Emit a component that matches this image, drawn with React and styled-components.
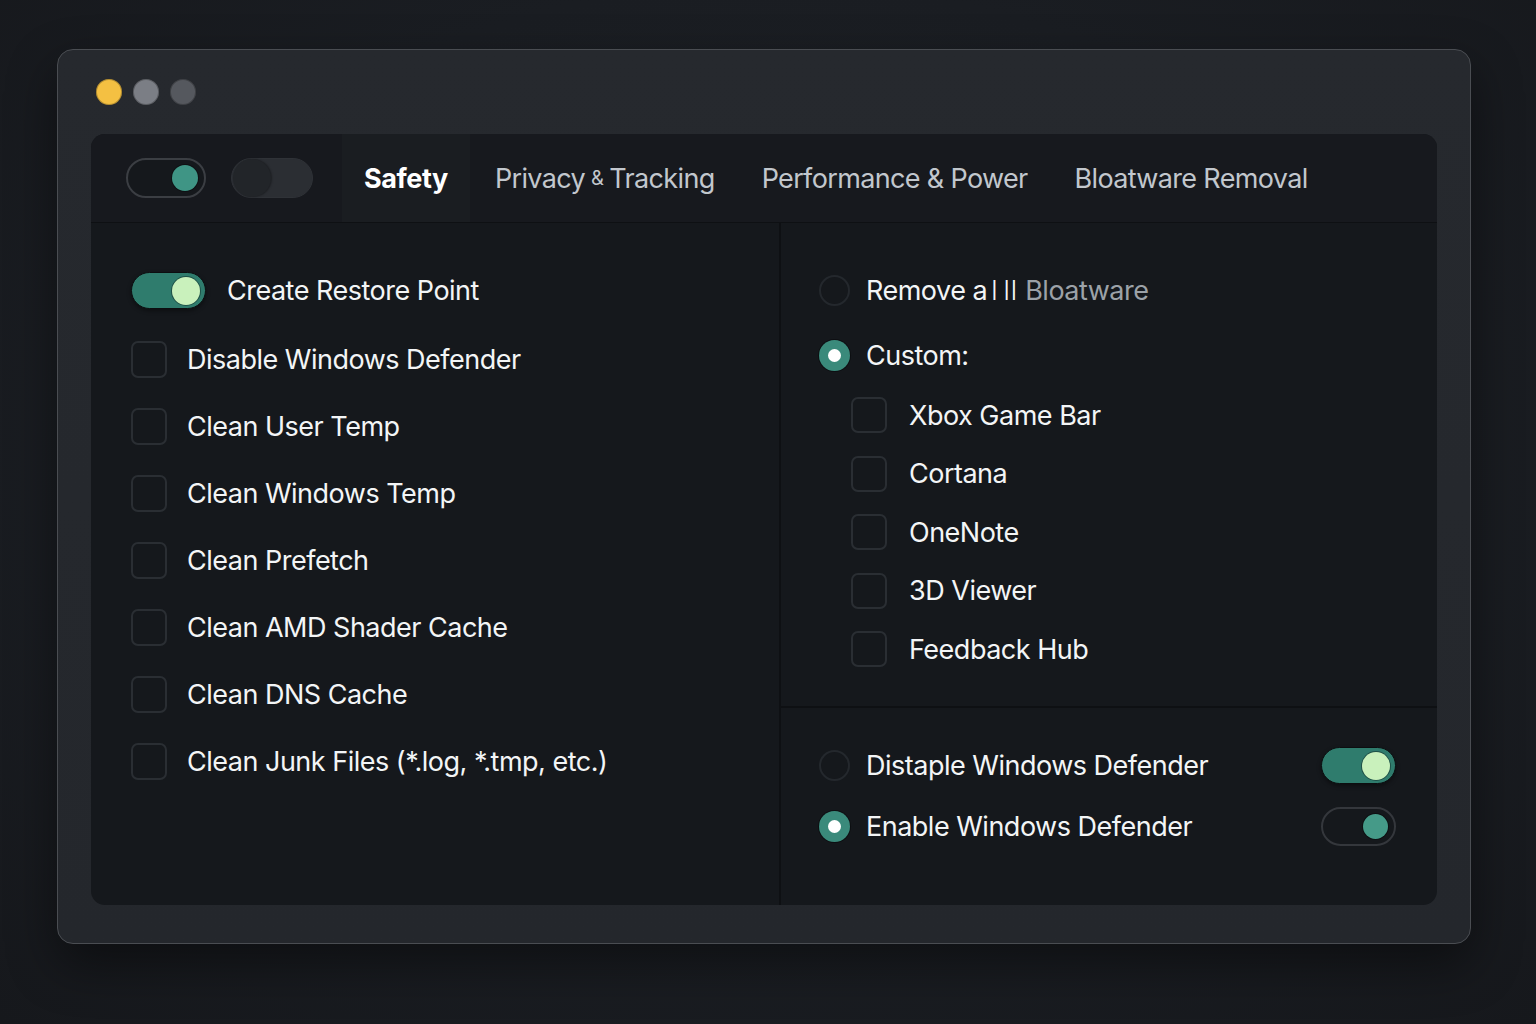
import React from "react";
import styled, { createGlobalStyle } from "styled-components";

const GlobalStyle = createGlobalStyle`
  html, body {
    margin: 0;
    padding: 0;
    background: radial-gradient(ellipse at 50% 45%, #1f2227 0%, #1a1d22 60%, #16181c 100%);
    min-height: 100vh;
    font-family: "Inter", "Noto Sans", sans-serif;
    -webkit-font-smoothing: antialiased;
  }
`;

const Page = styled.div`
  width: 1536px;
  height: 1024px;
  box-sizing: border-box;
  padding: 49px 65px 0 57px;
`;

const Window = styled.div`
  width: 1414px;
  height: 895px;
  box-sizing: border-box;
  background: linear-gradient(180deg, #26292e 0%, #24272c 100%);
  border: 1px solid #4a4d52;
  border-radius: 16px;
  box-shadow: 0 20px 50px rgba(0, 0, 0, 0.45);
  padding: 28px 33px 38px 33px;
  display: flex;
  flex-direction: column;
`;

const TitleBar = styled.div`
  display: flex;
  gap: 11px;
  padding-left: 5px;
  height: 28px;
  align-items: center;
  margin-bottom: 28px;
`;

const Light = styled.span`
  width: 26px;
  height: 26px;
  border-radius: 50%;
  background: ${p => p.color};
  box-shadow: inset 0 0 0 1px rgba(0, 0, 0, 0.25);
`;

const Panel = styled.div`
  flex: 1;
  background: #15181c;
  border-radius: 14px;
  overflow: hidden;
  display: flex;
  flex-direction: column;
`;

const TabBar = styled.div`
  height: 88px;
  flex-shrink: 0;
  display: flex;
  align-items: center;
  padding-left: 35px;
  background: #17191e;
  border-bottom: 1px solid #0e1013;
`;

const HeaderToggle = styled.div`
  box-sizing: border-box;
  width: ${p => p.w}px;
  height: 40px;
  border-radius: 20px;
  display: flex;
  align-items: center;
  justify-content: ${p => (p.on ? "flex-end" : "flex-start")};
  padding: 0 ${p => (p.on ? 6 : 1)}px;
  margin-right: ${p => p.mr}px;
  background: ${p => (p.on ? "#15181c" : "#2b2e33")};
  border: ${p => (p.on ? "2px solid #3b3e43" : "1px solid #2f3237")};
`;

const HeaderKnob = styled.span`
  width: ${p => p.size}px;
  height: ${p => p.size}px;
  border-radius: 50%;
  background: ${p => p.color};
  box-shadow: ${p => (p.flat ? "1px 0 2px rgba(0,0,0,0.35)" : "0 0 0 1px rgba(0,0,0,0.3)")};
`;

const Tabs = styled.div`
  display: flex;
  align-items: stretch;
  height: 100%;
  gap: 3px;
`;

const Tab = styled.div`
  display: flex;
  align-items: center;
  padding: 0 22px;
  font-size: 27px;
  letter-spacing: ${p => (p.active ? "-0.4px" : "-0.65px")};
  font-weight: ${p => (p.active ? 700 : 400)};
  color: ${p => (p.active ? "#ffffff" : "#c2c7cd")};
  background: ${p => (p.active ? "#1a1d21" : "transparent")};
`;

const Amp = styled.span`
  font-size: 20px;
  margin: 0 6px;
`;

const Content = styled.div`
  flex: 1;
  display: grid;
  grid-template-columns: 690px 1fr;
`;

const LeftCol = styled.div`
  border-right: 2px solid #0e1013;
  padding: 32px 0 0 40px;
  display: flex;
  flex-direction: column;
`;

const RightCol = styled.div`
  display: grid;
  grid-template-rows: 485px 1fr;
`;

const RightTop = styled.div`
  border-bottom: 2px solid #0e1013;
  padding: 33px 0 0 38px;
  display: flex;
  flex-direction: column;
`;

const RightBottom = styled.div`
  padding: 39px 41px 0 38px;
  display: flex;
  flex-direction: column;
  gap: 23px;
`;

const Row = styled.div`
  display: flex;
  align-items: center;
  height: ${p => p.h || 67}px;
  padding-left: ${p => p.indent || 0}px;
  gap: ${p => p.gap || 20}px;
  color: #f3f5f6;
  font-size: 27px;
  letter-spacing: -0.5px;
`;

const Label = styled.span`
  flex: 1;
`;

const Muted = styled.span`
  color: #9ca2a8;
`;

const Bar = styled.span`
  margin-left: ${p => p.ml}px;
  letter-spacing: 1px;
  font-weight: 300;
`;

const Checkbox = styled.span`
  box-sizing: border-box;
  width: ${p => p.size || 36}px;
  height: ${p => p.size || 37}px;
  border: 2px solid #2a2e33;
  border-radius: 7px;
  flex-shrink: 0;
`;

const Radio = styled.span`
  box-sizing: border-box;
  width: 31px;
  height: 31px;
  border-radius: 50%;
  flex-shrink: 0;
  display: flex;
  align-items: center;
  justify-content: center;
  border: ${p => (p.checked ? "none" : "2px solid #24282d")};
  background: ${p => (p.checked ? "#3a8a7b" : "transparent")};
  box-shadow: ${p => (p.checked ? "0 0 0 1px #0d0f12" : "none")};
  &::after {
    content: "";
    display: ${p => (p.checked ? "block" : "none")};
    width: 13px;
    height: 13px;
    border-radius: 50%;
    background: #ffffff;
  }
`;

const Switch = styled.span`
  box-sizing: border-box;
  width: 75px;
  height: ${p => (p.on ? 37 : 39)}px;
  border-radius: 20px;
  flex-shrink: 0;
  display: flex;
  align-items: center;
  justify-content: flex-end;
  padding-right: ${p => (p.on ? 5 : 6)}px;
  background: ${p => (p.on ? "#2f7c6d" : "#15181c")};
  border: ${p => (p.on ? "1px solid #0c0e10" : "2px solid #34373c")};
  box-shadow: ${p => (p.on ? "0 2px 4px rgba(0,0,0,0.4)" : "none")};
  &::after {
    content: "";
    width: ${p => (p.on ? 28 : 25)}px;
    height: ${p => (p.on ? 28 : 25)}px;
    border-radius: 50%;
    background: ${p => (p.on ? "#c9f1bc" : "#459a88")};
    box-shadow: 0 0 0 1px rgba(0, 0, 0, 0.35);
  }
`;

const leftItems = [
  "Disable Windows Defender",
  "Clean User Temp",
  "Clean Windows Temp",
  "Clean Prefetch",
  "Clean AMD Shader Cache",
  "Clean DNS Cache",
  "Clean Junk Files (*.log, *.tmp, etc.)",
];

const bloatItems = ["Xbox Game Bar", "Cortana", "OneNote", "3D Viewer", "Feedback Hub"];

const App = () => (
  <Page>
    <GlobalStyle />
    <Window>
      <TitleBar>
        <Light color="#f4c042" />
        <Light color="#7b7e85" />
        <Light color="#55585e" />
      </TitleBar>
      <Panel>
        <TabBar>
          <HeaderToggle on w={80} mr={25}>
            <HeaderKnob size={26} color="#3f9585" />
          </HeaderToggle>
          <HeaderToggle w={82} mr={29}>
            <HeaderKnob size={38} color="#222529" flat />
          </HeaderToggle>
          <Tabs>
            <Tab active>Safety</Tab>
            <Tab>
              Privacy<Amp>&amp;</Amp>Tracking
            </Tab>
            <Tab>Performance &amp; Power</Tab>
            <Tab>Bloatware Removal</Tab>
          </Tabs>
        </TabBar>
        <Content>
          <LeftCol>
            <Row h={71} gap={21}>
              <Switch on />
              <Label>Create Restore Point</Label>
            </Row>
            {leftItems.map(item => (
              <Row key={item} gap={20}>
                <Checkbox />
                <Label>{item}</Label>
              </Row>
            ))}
          </LeftCol>
          <RightCol>
            <RightTop>
              <Row h={68} gap={16}>
                <Radio />
                <Label>
                  Remove a<Bar ml={4}>l</Bar>
                  <Bar ml={5}>ll</Bar> <Muted>Bloatware</Muted>
                </Label>
              </Row>
              <Row h={62} gap={16}>
                <Radio checked />
                <Label>Custom:</Label>
              </Row>
              {bloatItems.map(item => (
                <Row key={item} h={58.5} indent={32} gap={22}>
                  <Checkbox size={36} />
                  <Label>{item}</Label>
                </Row>
              ))}
            </RightTop>
            <RightBottom>
              <Row h={37} gap={16}>
                <Radio />
                <Label>Distaple Windows Defender</Label>
                <Switch on />
              </Row>
              <Row h={39} gap={16}>
                <Radio checked />
                <Label>Enable Windows Defender</Label>
                <Switch />
              </Row>
            </RightBottom>
          </RightCol>
        </Content>
      </Panel>
    </Window>
  </Page>
);

export default App;
